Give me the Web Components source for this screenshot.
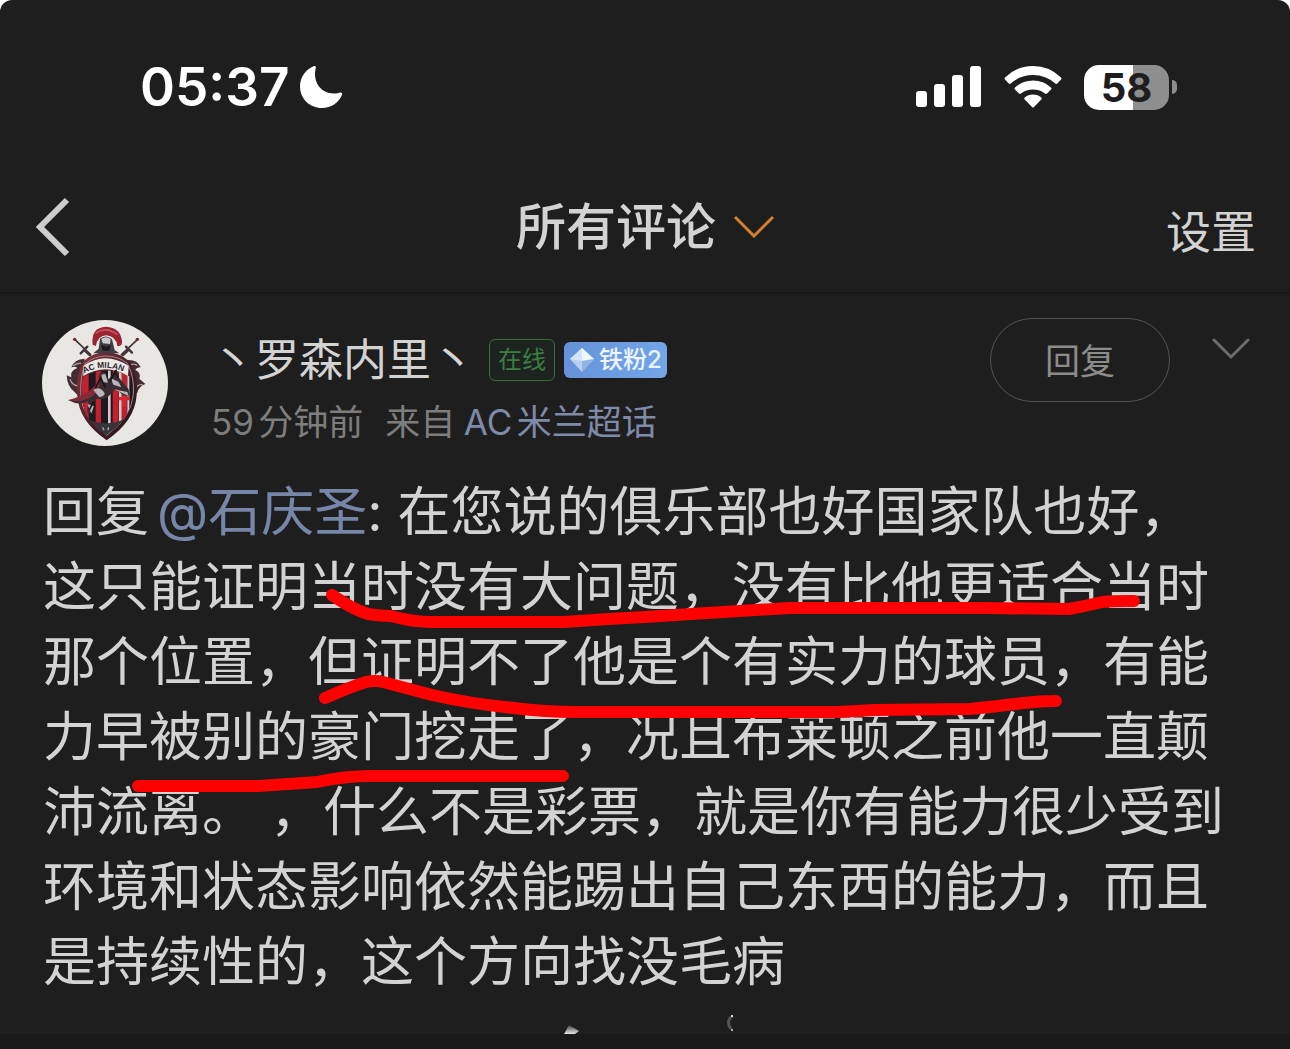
<!DOCTYPE html>
<html lang="zh-CN">
<head>
<meta charset="UTF-8">
<meta name="viewport" content="width=device-width, initial-scale=1.0">
<title>所有评论</title>
<style>
  body {
    margin: 0;
    background: #fff;
    color: #d3d3d3;
    font-family: Inter, "Noto Sans CJK SC", sans-serif;
  }
</style>
</head>
<body>
<comments-page>
  <status-bar slot="top" time="05:37" battery="58"></status-bar>
  <nav-bar slot="top">
    所有评论
    <span slot="action">设置</span>
  </nav-bar>
  <comment-card>
    <milan-avatar slot="avatar"></milan-avatar>
    <span slot="name">丶罗森内里丶</span>
    <fan-badge slot="badges" kind="online">在线</fan-badge>
    <fan-badge slot="badges" kind="level">铁粉2</fan-badge>
    <span slot="time">59分钟前</span>
    <span slot="source">AC米兰超话</span>
    <marked-text>回复<user-link>@石庆圣</user-link>: 在您说的俱乐部也好国家队也好，这只能证明当时没有大问题，没有比他更适合当时那个位置，但证明不了他是个有实力的球员，有能力早被别的豪门挖走了，况且布莱顿之前他一直颠沛流离。 ，什么不是彩票，就是你有能力很少受到环境和状态影响依然能踢出自己东西的能力，而且是持续性的，这个方向找没毛病</marked-text>
  </comment-card>
  <bottom-edge slot="bottom"></bottom-edge>
</comments-page>

<script>
class CommentsPage extends HTMLElement {
  connectedCallback() {
    this.attachShadow({ mode: 'open' });
    this.shadowRoot.innerHTML = `
      <style>
        :host {
          display: flex;
          flex-direction: column;
          min-height: 100vh;
          background: #1e1e1e;
          border-radius: 12px 12px 0 0;
          overflow: hidden;
        }
      </style>
      <slot name="top"></slot>
      <slot></slot>
      <slot name="bottom"></slot>
    `;
  }
}

class StatusBar extends HTMLElement {
  connectedCallback() {
    const level = this.getAttribute('battery');
    this.attachShadow({ mode: 'open' });
    this.shadowRoot.innerHTML = `
      <style>
        :host {
          display: flex;
          justify-content: space-between;
          align-items: center;
          height: 150px;
          padding: 12px 113px 0 140px;
          color: #fff;
        }
        .left, .right {
          display: flex;
          align-items: center;
        }
        .left { gap: 10px; }
        .right { gap: 22px; }
        time {
          font-size: 53px;
          font-weight: 600;
          line-height: 64px;
        }
        svg { display: block; }
        .battery {
          display: flex;
          align-items: center;
          gap: 3px;
        }
        .cell {
          width: 85px;
          line-height: 45px;
          border-radius: 15px;
          background: linear-gradient(to right, #fff ${level}%, #8e8e8e ${level}%);
          color: #1e1e1e;
          font-size: 40px;
          font-weight: 700;
          text-align: center;
        }
        .nub {
          width: 5px;
          height: 14px;
          border-radius: 0 5px 5px 0;
          background: #8e8e8e;
        }
      </style>
      <div class="left">
        <time>${this.getAttribute('time')}</time>
        <svg width="44" height="44" viewBox="0 0 44 44" fill="#fff">
          <path d="M14.5 1.2C16 .5 17.3 1.4 16.8 3C13.5 16 21 28.5 35 28.5C37.500 28.500 39.500 28 41 27.500C42.800 27 43.600 28.200 43 29.800C39.800 38 32 43 23 43C10.500 43 1 33.500 1 21.500C1 12.500 6.500 4.500 14.500 1.200Z"/>
        </svg>
      </div>
      <div class="right">
        <svg width="66" height="42" viewBox="0 0 66 42" fill="#fff">
          <rect x="0" y="25" width="11" height="16" rx="3"/>
          <rect x="18" y="18" width="11" height="23" rx="3"/>
          <rect x="36" y="9" width="11" height="32" rx="3"/>
          <rect x="54" y="0" width="11" height="41" rx="3"/>
        </svg>
        <svg width="58" height="42" viewBox="0 0 58 42" fill="#fff">
          <path d="M1 11.500Q0 12.500 1 13.500L4.700 17.600Q5.700 18.500 6.700 17.600Q16 9 29 9T51.300 17.600Q52.300 18.500 53.300 17.600L57 13.500Q58 12.500 57 11.500Q45.500 0 29 0T1 11.500Z"/>
          <path d="M11 21.500Q10 22.500 11 23.500L15 27.600Q16 28.500 17 27.600Q22 23.500 29 23.500T41 27.600Q42 28.500 43 27.600L47 23.500Q48 22.500 47 21.500Q39.500 14.500 29 14.500T11 21.500Z"/>
          <path d="M20.700 31.500Q19.700 32.500 20.700 33.500L28 41Q29 42 30 41L37.300 33.500Q38.300 32.500 37.300 31.500Q34 28.500 29 28.500T20.700 31.500Z"/>
        </svg>
        <div class="battery">
          <div class="cell">${level}</div>
          <div class="nub"></div>
        </div>
      </div>
    `;
  }
}

class NavBar extends HTMLElement {
  connectedCallback() {
    this.attachShadow({ mode: 'open' });
    this.shadowRoot.innerHTML = `
      <style>
        :host {
          display: grid;
          grid-template-columns: 1fr auto 1fr;
          align-items: center;
          height: 130px;
          padding: 0 34px;
          border-bottom: 2px solid #181818;
        }
        button {
          display: flex;
          align-items: center;
          padding: 0;
          border: 0;
          background: none;
          color: inherit;
          font: inherit;
          cursor: pointer;
        }
        h1 { margin: 0; font-size: 50px; font-weight: 500; line-height: 60px; }
        .title { gap: 18px; }
        .action { justify-self: end; font-size: 45px; padding-top: 4px; }
      </style>
      <button class="back" aria-label="返回">
        <svg width="38" height="60" viewBox="0 0 38 60" fill="none" stroke="#cdcdcd" stroke-width="6">
          <path d="M33 3L6 30L33 57"/>
        </svg>
      </button>
      <h1><button class="title">
        <span><slot></slot></span>
        <svg width="40" height="22" viewBox="0 0 40 22" fill="none" stroke="#d2812f" stroke-width="3">
          <path d="M1 1L20 20L39 1"/>
        </svg>
      </button></h1>
      <button class="action"><slot name="action"></slot></button>
    `;
  }
}

class MilanAvatar extends HTMLElement {
  connectedCallback() {
    this.attachShadow({ mode: 'open' });
    this.shadowRoot.innerHTML = `
      <style>
        :host { display: block; padding-top: 4px; }
        svg { display: block; border-radius: 50%; }
        text { font: 700 25px "Liberation Sans", sans-serif; fill: #26262c; }
      </style>
      <svg width="126" height="126" viewBox="66 60 378 378">
        <defs>
          <linearGradient id="rim" x2="1" y2="1">
            <stop offset="0" stop-color="#8d3443"/>
            <stop offset=".5" stop-color="#4b2028"/>
            <stop offset="1" stop-color="#1c1519"/>
          </linearGradient>
          <clipPath id="shield"><path d="M188 232Q258 190 334 232Q345 310 312 358Q288 388 258 404Q222 384 202 350Q178 300 188 232Z"/></clipPath>
        </defs>
        <rect x="66" y="60" width="378" height="378" fill="#e9e7e3"/>
        <!-- crossed swords -->
        <g stroke="#42343a" stroke-width="5" stroke-linecap="round">
          <path d="M164 118L212 164M353 118L304 164"/>
          <path d="M182 160L202 140M318 140L336 158M192 150L210 166M326 150L308 166" stroke-width="7"/>
        </g>
        <circle cx="164" cy="118" r="5" fill="#6e2630"/>
        <circle cx="352" cy="118" r="5" fill="#6e2630"/>
        <!-- side ornaments -->
        <path d="M194 176Q162 178 154 202Q166 198 172 204Q148 214 154 232L140 226Q142 262 164 276L178 292L190 220ZM322 180Q352 178 362 202Q350 202 346 210Q364 218 358 236L376 252Q358 258 352 278L336 292L326 220Z" fill="#432c32"/>
        <path d="M158 198Q170 188 184 190M150 238Q158 258 176 258M352 196Q340 190 332 194M368 254Q352 252 346 268" fill="none" stroke="#a9a0a0" stroke-width="4"/>
        <!-- shield -->
        <path d="M192 182Q224 156 258 158Q296 156 328 184Q356 226 350 286Q344 364 260 421Q176 364 172 286Q166 222 192 182Z" fill="url(#rim)"/>
        <path d="M196 190Q226 168 258 168Q294 168 322 190Q344 230 340 284Q332 356 260 406Q186 356 182 284Q180 228 196 190Z" fill="none" stroke="#9a8b8d" stroke-width="3"/>
        <g clip-path="url(#shield)">
          <rect x="170" y="190" width="180" height="220" fill="#1c1a20"/>
          <path d="M186 190h20v220h-20zM227 190h16v220h-16zM278 190h18v220h-18zM306 190h15v220h-15z" fill="#c2202c"/>
          <path d="M264 190h8v220h-8zM297 190h8v220h-8zM322 190h6v220h-6z" fill="#d8c9c5"/>
          <path d="M296 296h34M312 276v44" stroke="#d52733" stroke-width="10"/>
          <path d="M190 350Q258 390 326 350V410H190Z" fill="#37343a"/>
        </g>
        <path d="M190 198Q256 152 326 198L324 228Q256 188 190 228Z" fill="#ece8e4"/>
        <path id="arc" d="M192 220Q258 184 332 226" fill="none"/>
        <text><textPath href="#arc">AC MILAN</textPath></text>
        <!-- rider -->
        <path d="M144 300Q176 302 200 284Q216 264 238 260L236 230Q242 208 256 218L266 238L290 208L296 232Q308 248 326 268L328 290L308 284L288 266L272 282Q258 302 230 296L212 318L222 342L202 338L204 304Q176 318 144 300Z" fill="#382c32"/>
        <path d="M144 300Q180 292 206 274L232 250L226 282Q190 312 144 300Z" fill="#852a38"/>
        <path d="M220 270Q238 258 250 274Q262 286 238 292ZM272 234L296 246L304 262L280 254ZM282 268L322 276L326 288ZM202 312L222 318L214 340ZM244 224L256 222L264 248L248 246Z" fill="#b9b4b5"/>
        <path d="M226 264L242 234L256 262M270 244L286 214L294 234M208 330L220 306" fill="none" stroke="#17161b" stroke-width="5"/>
        <path d="M248 382l4 9M266 382l-3 9" stroke="#aaa" stroke-width="4"/>
        <!-- helmet -->
        <path d="M240 116Q260 102 276 118L284 150L298 160H220L236 146Z" fill="#3f3d42"/>
        <path d="M218 134Q212 82 258 80Q302 82 306 124Q308 140 292 138Q288 108 258 106Q232 108 228 138Z" fill="#9b2433"/>
        <path d="M226 100Q258 78 292 104" fill="none" stroke="#c55560" stroke-width="5"/>
        <path d="M244 116Q260 106 272 118L270 132L248 130Z" fill="#c9cacc"/>
        <path d="M244 134L258 140L272 136L268 152H248Z" fill="#1a1a1e"/>
      </svg>
    `;
  }
}

class FanBadge extends HTMLElement {
  connectedCallback() {
    const isLevel = this.getAttribute('kind') === 'level';
    const gem = `
      <svg width="26" height="26" viewBox="0 0 26 26">
        <path d="M13 1L25 12L13 25L1 12Z" fill="#b9d0f2"/>
        <path d="M13 1L1 12L13 14Z" fill="#d5e4fa"/>
        <path d="M13 1L25 12L13 14Z" fill="#f0f6ff"/>
        <path d="M13 14L25 12L13 25Z" fill="#90b2e6"/>
      </svg>`;
    this.attachShadow({ mode: 'open' });
    this.shadowRoot.innerHTML = `
      <style>
        :host {
          display: flex;
          align-items: center;
          box-sizing: border-box;
          font-size: 24px;
          border-radius: 6px;
          white-space: nowrap;
        }
        :host([kind="online"]) {
          padding: 0 8px;
          line-height: 40px;
          border: 1px solid #3c6b42;
          background: #1d231e;
          color: #3b7d42;
        }
        :host([kind="level"]) {
          gap: 4px;
          padding: 0 5px;
          line-height: 36px;
          background: linear-gradient(100deg, #6592d8, #72a7e8);
          color: #edf4ff;
          font-weight: 500;
        }
      </style>
      ${isLevel ? gem : ''}<span><slot></slot></span>
    `;
  }
}

class CommentCard extends HTMLElement {
  connectedCallback() {
    this.attachShadow({ mode: 'open' });
    this.shadowRoot.innerHTML = `
      <style>
        :host { display: block; padding: 22px 0 34px; }
        header {
          display: flex;
          align-items: flex-start;
          padding: 0 40px 0 42px;
        }
        .info { flex: 1; padding: 12px 0 0 43px; }
        .name {
          display: flex;
          align-items: center;
          gap: 9px;
          font-size: 44px;
          line-height: 64px;
        }
        .name span { margin-right: 5px; }
        .meta {
          display: flex;
          gap: 22px;
          color: #7d7d7d;
          font-size: 35px;
          line-height: 60px;
          text-autospace: normal;
        }
        a {
          margin-left: 4px;
          color: #7e8aa8;
          text-decoration: none;
        }
        button {
          padding: 0;
          background: none;
          color: #8c8c8c;
          font: inherit;
          cursor: pointer;
        }
        .reply {
          width: 180px;
          height: 84px;
          margin-top: 2px;
          padding-bottom: 4px;
          border: 1px solid #535353;
          border-radius: 42px;
          font-size: 35px;
        }
        .more {
          border: 0;
          margin: 22px 0 0 42px;
        }
        svg { display: block; }
      </style>
      <header>
        <slot name="avatar"></slot>
        <div class="info">
          <div class="name"><span><slot name="name"></slot></span><slot name="badges"></slot></div>
          <div class="meta">
            <slot name="time"></slot>
            <div>来自<a href="#topic"><slot name="source"></slot></a></div>
          </div>
        </div>
        <button class="reply">回复</button>
        <button class="more" aria-label="更多">
          <svg width="38" height="22" viewBox="0 0 38 22" fill="none" stroke="#6c6c6c" stroke-width="3" stroke-linecap="round">
            <path d="M2 2L19 19L36 2"/>
          </svg>
        </button>
      </header>
      <slot></slot>
    `;
  }
}

class UserLink extends HTMLElement {
  connectedCallback() {
    this.attachShadow({ mode: 'open' });
    this.shadowRoot.innerHTML = `<style>
        :host { display: inline; }
        a { margin-left: 8px; color: #7686a8; text-decoration: none; }
      </style><a href="#user"><slot></slot></a>`;
  }
}

// comment text with the hand drawn underlines on top
class MarkedText extends HTMLElement {
  connectedCallback() {
    this.attachShadow({ mode: 'open' });
    this.shadowRoot.innerHTML = `
      <style>
        :host { display: block; position: relative; }
        p {
          margin: 0;
          padding: 23px 60px 0 43px;
          font-size: 53px;
          font-weight: 400;
          line-height: 75px;
          text-spacing-trim: space-all;
        }
        svg {
          position: absolute;
          top: 0;
          left: 0;
          width: 100%;
          pointer-events: none;
        }
      </style>
      <p><slot></slot></p>
      <svg viewBox="0 452 1290 548" fill="none" stroke="#fe0000" stroke-width="12" stroke-linecap="round" stroke-linejoin="round">
        <path d="M332 595Q352 609 368 614Q380 616 391 616Q412 622 432 622H564Q604 619 645 617L707 613L789 608H986L1069 609Q1086 606 1102 602Q1115 601 1134 601"/>
        <path d="M325 698Q350 687 366 682Q375 680 383 682L432 695Q472 704 514 708Q545 712 576 712H838L875 710L970 709Q1000 706 1023 703Q1040 701 1056 701"/>
        <path d="M138 786H259L317 782Q345 776 370 776H563"/>
      </svg>
    `;
  }
}

class BottomEdge extends HTMLElement {
  connectedCallback() {
    this.attachShadow({ mode: 'open' });
    this.shadowRoot.innerHTML = `
      <style>
        :host {
          display: block;
          position: relative;
          flex: 1;
          min-height: 14px;
          background: #191919;
        }
        svg { position: absolute; left: 43%; bottom: 100%; }
      </style>
      <svg width="190" height="24" viewBox="0 0 190 24">
        <defs>
          <linearGradient id="fade" x2="0" y2="1">
            <stop offset="0" stop-color="#3a3a3a"/>
            <stop offset="1" stop-color="#e8e8e8"/>
          </linearGradient>
        </defs>
        <path d="M9 24L14 15L24 21L20 24Z" fill="url(#fade)"/>
        <path d="M178 6Q170 10 176 19" fill="none" stroke="#555" stroke-width="3"/>
        <circle cx="177" cy="6" r="1" fill="#fff"/>
        <circle cx="177" cy="20" r="1" fill="#ddd"/>
      </svg>
    `;
  }
}

customElements.define('comments-page', CommentsPage);
customElements.define('status-bar', StatusBar);
customElements.define('nav-bar', NavBar);
customElements.define('milan-avatar', MilanAvatar);
customElements.define('fan-badge', FanBadge);
customElements.define('comment-card', CommentCard);
customElements.define('user-link', UserLink);
customElements.define('marked-text', MarkedText);
customElements.define('bottom-edge', BottomEdge);
</script>
</body>
</html>
